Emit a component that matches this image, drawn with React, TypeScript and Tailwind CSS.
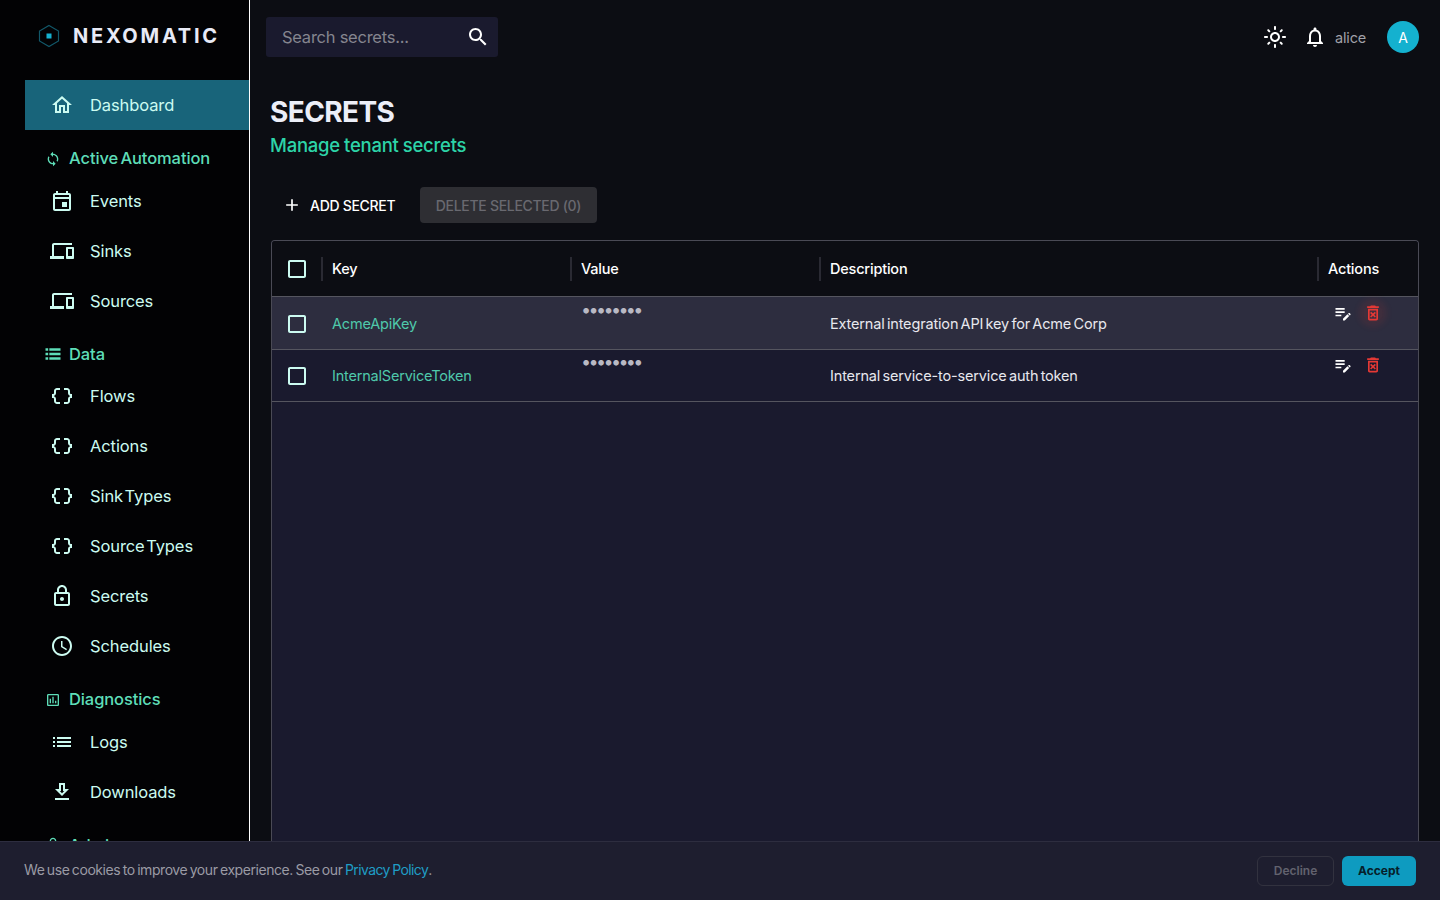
const icons = {
  home: "m12 5.69 5 4.5V18h-2v-6H9v6H7v-7.81zM12 3 2 12h3v8h6v-6h2v6h6v-8h3z",
  sync: "M12 4V1L8 5l4 4V6c3.31 0 6 2.69 6 6 0 1.01-.25 1.97-.7 2.8l1.46 1.46C19.54 15.03 20 13.57 20 12c0-4.42-3.58-8-8-8m0 14c-3.31 0-6-2.69-6-6 0-1.01.25-1.97.7-2.8L5.24 7.74C4.46 8.97 4 10.43 4 12c0 4.42 3.58 8 8 8v3l4-4-4-4z",
  event: "M19 4h-1V2h-2v2H8V2H6v2H5c-1.11 0-1.99.9-1.99 2L3 20c0 1.1.89 2 2 2h14c1.1 0 2-.9 2-2V6c0-1.1-.9-2-2-2m0 16H5V10h14zm0-12H5V6h14zm-7 5h5v5h-5z",
  devices: "M4 6h18V4H4c-1.1 0-2 .9-2 2v11H0v3h14v-3H4zm19 2h-6c-.55 0-1 .45-1 1v10c0 .55.45 1 1 1h6c.55 0 1-.45 1-1V9c0-.55-.45-1-1-1m-1 9h-4v-7h4z",
  viewList: "M3 5h3.2v3H3zm0 5.5h3.2v3H3zM3 16h3.2v3H3zM7.6 5H21v3H7.6zm0 5.5H21v3H7.6zm0 5.5H21v3H7.6z",
  dataObject: "M4 7v2c0 .55-.45 1-1 1H2v4h1c.55 0 1 .45 1 1v2c0 1.65 1.35 3 3 3h3v-2H7c-.55 0-1-.45-1-1v-2c0-1.3-.84-2.42-2-2.83v-.34C5.16 11.42 6 10.3 6 9V7c0-.55.45-1 1-1h3V4H7C5.35 4 4 5.35 4 7m17 3c-.55 0-1-.45-1-1V7c0-1.65-1.35-3-3-3h-3v2h3c.55 0 1 .45 1 1v2c0 1.3.84 2.42 2 2.83v.34c-1.16.41-2 1.52-2 2.83v2c0 .55-.45 1-1 1h-3v2h3c1.65 0 3-1.35 3-3v-2c0-.55.45-1 1-1h1v-4z",
  lock: "M18 8h-1V6c0-2.76-2.24-5-5-5S7 3.24 7 6v2H6c-1.1 0-2 .9-2 2v10c0 1.1.9 2 2 2h12c1.1 0 2-.9 2-2V10c0-1.1-.9-2-2-2M9 6c0-1.66 1.34-3 3-3s3 1.34 3 3v2H9zm9 14H6V10h12zm-6-3c1.1 0 2-.9 2-2s-.9-2-2-2-2 .9-2 2 .9 2 2 2",
  clock: "M11.99 2C6.47 2 2 6.48 2 12s4.47 10 9.99 10C17.52 22 22 17.52 22 12S17.52 2 11.99 2M12 20c-4.42 0-8-3.58-8-8s3.58-8 8-8 8 3.58 8 8-3.58 8-8 8m.5-13H11v6l5.25 3.15.75-1.23-4.5-2.67z",
  assessment: "M19 3H5c-1.1 0-2 .9-2 2v14c0 1.1.9 2 2 2h14c1.1 0 2-.9 2-2V5c0-1.1-.9-2-2-2m0 16H5V5h14zM7 10h2v7H7zm4-3h2v10h-2zm4 6h2v4h-2z",
  list: "M3 13h2v-2H3zm0 4h2v-2H3zm0-8h2V7H3zm4 4h14v-2H7zm0 4h14v-2H7zM7 7v2h14V7z",
  download: "M19 9h-4V3H9v6H5l7 7zm-8 2V5h2v6h1.17L12 13.17 9.83 11zm-6 7h14v2H5z",
  search: "M15.5 14h-.79l-.28-.27C15.41 12.59 16 11.11 16 9.5 16 5.91 13.09 3 9.5 3S3 5.91 3 9.5 5.91 16 9.5 16c1.61 0 3.09-.59 4.23-1.57l.27.28v.79l5 4.99L20.49 19zm-6 0C7.01 14 5 11.99 5 9.5S7.01 5 9.5 5 14 7.01 14 9.5 11.99 14 9.5 14",
  sun: "M12 9c1.65 0 3 1.35 3 3s-1.35 3-3 3-3-1.35-3-3 1.35-3 3-3m0-2c-2.76 0-5 2.24-5 5s2.24 5 5 5 5-2.24 5-5-2.24-5-5-5M2 13h2c.55 0 1-.45 1-1s-.45-1-1-1H2c-.55 0-1 .45-1 1s.45 1 1 1m18 0h2c.55 0 1-.45 1-1s-.45-1-1-1h-2c-.55 0-1 .45-1 1s.45 1 1 1M11 2v2c0 .55.45 1 1 1s1-.45 1-1V2c0-.55-.45-1-1-1s-1 .45-1 1m0 18v2c0 .55.45 1 1 1s1-.45 1-1v-2c0-.55-.45-1-1-1s-1 .45-1 1M5.99 4.58c-.39-.39-1.03-.39-1.41 0-.39.39-.39 1.03 0 1.41l1.06 1.06c.39.39 1.03.39 1.41 0s.39-1.03 0-1.41zm12.37 12.37c-.39-.39-1.03-.39-1.41 0-.39.39-.39 1.03 0 1.41l1.06 1.06c.39.39 1.03.39 1.41 0 .39-.39.39-1.03 0-1.41zm1.06-10.96c.39-.39.39-1.03 0-1.41-.39-.39-1.03-.39-1.41 0l-1.06 1.06c-.39.39-.39 1.03 0 1.41s1.03.39 1.41 0zM7.05 18.36c.39-.39.39-1.03 0-1.41-.39-.39-1.03-.39-1.41 0l-1.06 1.06c-.39.39-.39 1.03 0 1.41s1.03.39 1.41 0z",
  bell: "M12 22c1.1 0 2-.9 2-2h-4c0 1.1.9 2 2 2m6-6v-5c0-3.07-1.63-5.64-4.5-6.32V4c0-.83-.67-1.5-1.5-1.5s-1.5.67-1.5 1.5v.68C7.64 5.36 6 7.92 6 11v5l-2 2v1h16v-1zm-2 1H8v-6c0-2.48 1.51-4.5 4-4.5s4 2.02 4 4.5z",
  editNote: "M3 10h11v2H3zm0-2h11V6H3zm0 8h7v-2H3zm15.01-3.13.71-.71c.39-.39 1.02-.39 1.41 0l.71.71c.39.39.39 1.02 0 1.41l-.71.71zm-.71.71L12 18.88V21h2.12l5.3-5.3z",
  trash: "M14.12 10.47 12 12.59l-2.13-2.12-1.41 1.41L10.59 14l-2.12 2.12 1.41 1.41L12 15.41l2.12 2.12 1.41-1.41L13.41 14l2.12-2.12zM15.5 4l-1-1h-5l-1 1H5v2h14V4zM6 19c0 1.1.9 2 2 2h8c1.1 0 2-.9 2-2V7H6zM8 9h8v10H8z",
  plus: "M19 13h-6v6h-2v-6H5v-2h6V5h2v6h6v2z",
  check: "M19 5v14H5V5h14m0-2H5c-1.1 0-2 .9-2 2v14c0 1.1.9 2 2 2h14c1.1 0 2-.9 2-2V5c0-1.1-.9-2-2-2z",
};

function Icon({ d, className }: { d: string; className: string }) {
  return (
    <svg viewBox="0 0 24 24" className={`fill-current shrink-0 ${className}`}>
      <path d={d} />
    </svg>
  );
}

function NavItem({ icon, label, active }: { icon: string; label: string; active?: boolean }) {
  return (
    <div className={`flex items-center h-[50px] ml-[25px] pl-[25px] ${active ? "bg-[#18647a]" : ""}`}>
      <Icon d={icon} className="w-6 h-6 text-[#ccfbf1]" />
      <span className="ml-[16px] text-[16.5px] tracking-[-0.1px] [word-spacing:-3px] text-[#ccfbf1]">{label}</span>
    </div>
  );
}

function NavLabel({ icon, label, tall, wide }: { icon: string; label: string; tall?: boolean; wide?: boolean }) {
  return (
    <div className={`flex items-center pt-[11px] pl-[45px] text-[#5eddb8] ${tall ? "h-[46px]" : "h-[45px]"}`}>
      <Icon d={icon} className={wide ? "w-5 h-5 -mx-[2px]" : "w-4 h-4"} />
      <span className="ml-[8px] text-[16.5px] font-medium tracking-[-0.1px] [word-spacing:-2px]">{label}</span>
    </div>
  );
}

const rows = [
  { key: "AcmeApiKey", desc: "External integration API key for Acme Corp", rowClass: "h-[53px] pt-[2px] bg-[#2d2d3f]", hover: true },
  { key: "InternalServiceToken", desc: "Internal service-to-service auth token", rowClass: "h-[52px] pt-[1px]", hover: false },
];

const cols = "grid grid-cols-[50px_249px_249px_498px_100px]";

function HeadCell({ label }: { label: string }) {
  return (
    <div className="relative flex items-center pl-[10px] pt-[1px] text-[14.5px] font-medium tracking-[-0.2px] text-white">
      <span className="absolute -left-px top-[16px] h-[24px] w-[2px] bg-[#2a2a33]" />
      {label}
    </div>
  );
}

export default function App() {
  return (
    <div className="relative flex h-[900px] w-[1440px] overflow-hidden bg-[#0c0d13] font-['Inter',sans-serif] text-white">
      {/* Sidebar */}
      <aside className="w-[250px] shrink-0 h-full overflow-hidden bg-[#020204] border-r border-white">
        <div className="flex items-center h-[80px] pb-[9px] pl-[37px]">
          <svg viewBox="0 0 24 24" className="w-[24px] h-[24px]">
            <path d="M12 1.5 21.5 7v10L12 22.5 2.5 17V7z" fill="none" stroke="#12586a" strokeWidth="1.2" />
            <rect x="9.5" y="9.5" width="5" height="5" fill="#16b1cf" />
          </svg>
          <span className="ml-[12px] text-[20px] font-bold tracking-[2.75px] text-[#e8eaf6]">NEXOMATIC</span>
        </div>
        <NavItem icon={icons.home} label="Dashboard" active />
        <NavLabel icon={icons.sync} label="Active Automation" tall />
        <NavItem icon={icons.event} label="Events" />
        <NavItem icon={icons.devices} label="Sinks" />
        <NavItem icon={icons.devices} label="Sources" />
        <NavLabel icon={icons.viewList} label="Data" wide />
        <NavItem icon={icons.dataObject} label="Flows" />
        <NavItem icon={icons.dataObject} label="Actions" />
        <NavItem icon={icons.dataObject} label="Sink Types" />
        <NavItem icon={icons.dataObject} label="Source Types" />
        <NavItem icon={icons.lock} label="Secrets" />
        <NavItem icon={icons.clock} label="Schedules" />
        <NavLabel icon={icons.assessment} label="Diagnostics" tall />
        <NavItem icon={icons.list} label="Logs" />
        <NavItem icon={icons.download} label="Downloads" />
        <NavLabel icon={icons.lock} label="Admin" />
      </aside>

      {/* Main */}
      <main className="flex-1 min-w-0 flex flex-col">
        <header className="flex items-center h-[74px] pl-[16px] pr-[21px]">
          <div className="flex items-center w-[232px] h-[40px] rounded-[3px] bg-[#1a1a2e] pl-[16px] pr-[8px]">
            <input
              readOnly
              placeholder="Search secrets..."
              className="min-w-0 flex-1 bg-transparent text-[16.5px] tracking-[-0.25px] outline-none placeholder:text-[#85858f]"
            />
            <Icon d={icons.search} className="w-6 h-6 text-white" />
          </div>
          <div className="ml-auto flex items-center">
            <Icon d={icons.sun} className="w-6 h-6 text-white" />
            <Icon d={icons.bell} className="ml-[16px] w-6 h-6 text-white" />
            <span className="ml-[8px] mt-[2px] text-[14.5px] tracking-[-0.2px] text-[#a0a0a8]">alice</span>
            <div className="ml-[21px] flex items-center justify-center w-[32px] h-[32px] rounded-full bg-[#14b1cf] text-[14px] text-white">
              A
            </div>
          </div>
        </header>

        <div className="pl-[20px] pt-[20px]">
          <h1 className="text-[28px] leading-[36px] font-bold tracking-[-0.6px] text-[#eceef8]">SECRETS</h1>
          <p className="mt-[2px] text-[18.5px] leading-[26px] font-medium tracking-[-0.25px] [word-spacing:-0.5px] text-[#2dd4a8]">Manage tenant secrets</p>
        </div>

        <div className="flex items-center gap-[8px] pl-[20px] mt-[29px] h-[36px]">
          <button className="flex items-center w-[142px] h-[36px] pl-[12px] text-[14px] font-medium tracking-[-0.3px] text-white">
            <Icon d={icons.plus} className="w-[20px] h-[20px]" />
            <span className="ml-[8px]">ADD SECRET</span>
          </button>
          <button className="h-[36px] w-[177px] rounded-[4px] bg-[#2e2e33] text-[14px] font-medium tracking-[-0.3px] text-[#696970]">
            DELETE SELECTED (0)
          </button>
        </div>

        {/* Table */}
        <div className="mt-[17px] ml-[21px] w-[1148px] flex-1 bg-[#1a1a2e] border-x border-t border-[#4a4a55] rounded-t-[4px] overflow-hidden">
          <div className={`${cols} h-[56px] bg-[#0c0d13] border-b border-[#55555f]`}>
            <div className="flex items-center pl-[13px]">
              <Icon d={icons.check} className="w-6 h-6 text-[#ccfbf1]" />
            </div>
            <HeadCell label="Key" />
            <HeadCell label="Value" />
            <HeadCell label="Description" />
            <HeadCell label="Actions" />
          </div>
          {rows.map((r) => (
            <div key={r.key} className={`${cols} border-b border-[#55555f] ${r.rowClass}`}>
              <div className="flex items-center pl-[13px]">
                <Icon d={icons.check} className="w-6 h-6 text-[#ccfbf1]" />
              </div>
              <div className="flex items-center pl-[10px] text-[14.5px] tracking-[-0.2px] text-[#4fc9ab]">{r.key}</div>
              <div className="pl-[10px] pt-[1px] text-[18px] leading-[20px] tracking-[-2.65px] text-[#b9b9c4]">••••••••</div>
              <div className="flex items-center pl-[10px] text-[14.5px] tracking-[-0.16px] [word-spacing:-1.6px] text-[#e8e8ee]">{r.desc}</div>
              <div className="flex pl-[15px] pt-[4px]">
                <Icon d={icons.editNote} className="w-[20px] h-[20px] text-white" />
                <span className={`ml-[10px] w-[20px] h-[20px] rounded-full ${r.hover ? "bg-[#e53935]/10 shadow-[0_0_6px_4px_rgba(229,57,53,0.1)]" : ""}`}>
                  <Icon d={icons.trash} className="w-[20px] h-[20px] text-[#e53935]" />
                </span>
              </div>
            </div>
          ))}
        </div>
      </main>

      {/* Cookie bar */}
      <div className="absolute bottom-0 inset-x-0 h-[59px] flex items-center pl-[24px] pr-[24px] bg-[#1e1e2f] border-t border-[#2d2d3f]">
        <p className="mb-[3px] text-[14px] tracking-[-0.44px] [word-spacing:-1px] text-[#9b9ba5]">
          We use cookies to improve your experience. See our <span className="tracking-[-0.6px] text-[#1f9dc6]">Privacy Policy</span>.
        </p>
        <button className="ml-auto w-[77px] h-[30px] rounded-[6px] border border-[#32323f] text-[12px] font-semibold text-[#62626e]">
          Decline
        </button>
        <button className="ml-[8px] w-[74px] h-[30px] rounded-[6px] bg-[#0e9bc0] text-[12px] font-bold text-[#06202a]">
          Accept
        </button>
      </div>
    </div>
  );
}
